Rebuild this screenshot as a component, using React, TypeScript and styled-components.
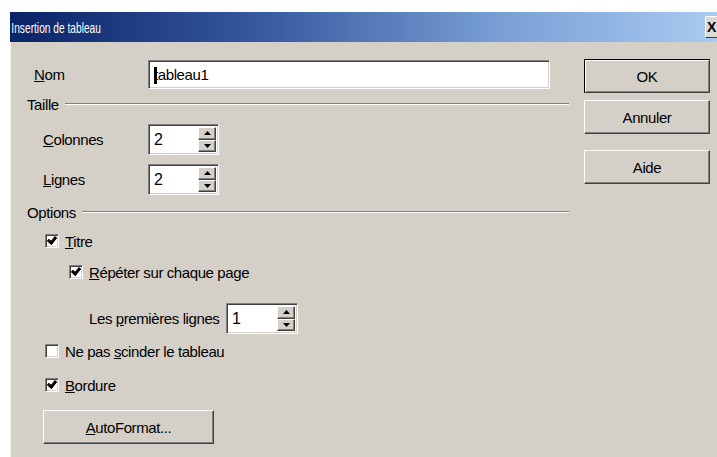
import styled, { createGlobalStyle } from "styled-components";

const Global = createGlobalStyle`
    body {
        margin: 0;
        background: #ffffff;
        font-family: "Liberation Sans", Arial, sans-serif;
        font-size: 15px;
        letter-spacing: -0.4px;
        color: #000;
    }
`;

const FACE = "#d4d0c8";

const App = () => {
    return (
        <>
            <Global />
            <Window>
                <TitleBar>
                    <Caption>Insertion de tableau</Caption>
                    <CloseButton>X</CloseButton>
                </TitleBar>
                <Body>
                    <Main>
                        <FieldRow $top={18} $indent={23}>
                            <Label $width={114}><u>N</u>om</Label>
                            <TextInput>
                                <Caret />
                                <span>tableau1</span>
                            </TextInput>
                        </FieldRow>

                        <Section $top={5}>
                            <span>Taille</span>
                            <Rule />
                        </Section>
                        <FieldRow $top={10} $indent={32}>
                            <Label $width={105}><u>C</u>olonnes</Label>
                            <Spinner value="2" width={71} />
                        </FieldRow>
                        <FieldRow $top={9} $indent={32}>
                            <Label $width={105}><u>L</u>ignes</Label>
                            <Spinner value="2" width={71} />
                        </FieldRow>

                        <Section $top={7}>
                            <span>Options</span>
                            <Rule />
                        </Section>
                        <CheckRow $top={9} $indent={34}>
                            <CheckBox $checked />
                            <span><u>T</u>itre</span>
                        </CheckRow>
                        <CheckRow $top={11} $indent={58}>
                            <CheckBox $checked />
                            <span><u>R</u>épéter sur chaque page</span>
                        </CheckRow>
                        <FieldRow $top={21} $indent={78}>
                            <Label $width={137}>Les <u>p</u>remières lignes</Label>
                            <Spinner value="1" width={72} />
                        </FieldRow>
                        <CheckRow $top={7} $indent={34}>
                            <CheckBox />
                            <span>Ne pas <u>s</u>cinder le tableau</span>
                        </CheckRow>
                        <CheckRow $top={14} $indent={34}>
                            <CheckBox $checked />
                            <span><u>B</u>ordure</span>
                        </CheckRow>
                        <FieldRow $top={15} $indent={32}>
                            <PushButton $width={171}><u>A</u>utoFormat...</PushButton>
                        </FieldRow>
                    </Main>

                    <Side>
                        <PushButton $width={126} $default>OK</PushButton>
                        <PushButton $width={126}>Annuler</PushButton>
                        <PushButton $width={126} $gap={9}>Aide</PushButton>
                    </Side>
                </Body>
            </Window>
        </>
    );
};

interface SpinnerProps {
    value: string;
    width: number;
}

const Spinner = ({ value, width }: SpinnerProps) => (
    <SpinBox style={{ width }}>
        <SpinText>{value}</SpinText>
        <SpinButtons>
            <SpinArrow>
                <svg width="7" height="4" viewBox="0 0 7 4"><path d="M3.5 0 L7 4 L0 4 Z" fill="#000" /></svg>
            </SpinArrow>
            <SpinArrow>
                <svg width="7" height="4" viewBox="0 0 7 4"><path d="M0 0 L7 0 L3.5 4 Z" fill="#000" /></svg>
            </SpinArrow>
        </SpinButtons>
    </SpinBox>
);

const Window = styled.div`
    margin: 12px 0 0 10px;
    width: 707px;
    height: 445px;
    display: flex;
    flex-direction: column;
    background: ${FACE};
    overflow: hidden;
`;

const TitleBar = styled.div`
    height: 30px;
    display: flex;
    align-items: center;
    justify-content: space-between;
    background: linear-gradient(to right, #0a2266 0%, #36589f 35%, #7aa0d6 70%, #a9cbf0 100%);
`;

const Caption = styled.span`
    color: #ffffff;
    font-size: 15px;
    letter-spacing: 0;
    padding-left: 2px;
    transform: scaleX(0.68);
    transform-origin: left center;
    white-space: nowrap;
`;

const CloseButton = styled.div`
    width: 12px;
    height: 22px;
    padding-left: 1px;
    box-sizing: border-box;
    background: #dcdad4;
    border-top: 1px solid #ffffff;
    border-left: 1px solid #ffffff;
    border-bottom: 1px solid #404040;
    font-weight: bold;
    font-size: 14px;
    letter-spacing: 0;
    line-height: 20px;
    color: #000;
`;

const Body = styled.div`
    flex: 1;
    display: flex;
    border-left: 1px solid #f4f2ee;
`;

const Main = styled.div`
    width: 558px;
    display: flex;
    flex-direction: column;
`;

const Side = styled.div`
    display: flex;
    flex-direction: column;
    gap: 7px;
    padding: 17px 0 0 15px;
`;

const FieldRow = styled.div<{ $top: number; $indent: number }>`
    display: flex;
    align-items: center;
    margin-top: ${(p) => p.$top}px;
    padding-left: ${(p) => p.$indent}px;
`;

const Label = styled.span<{ $width: number }>`
    width: ${(p) => p.$width}px;
    flex-shrink: 0;
    white-space: nowrap;
`;

const Section = styled.div<{ $top: number }>`
    display: flex;
    align-items: center;
    gap: 6px;
    height: 20px;
    margin-top: ${(p) => p.$top}px;
    padding-left: 16px;
`;

const Rule = styled.div`
    flex: 1;
    height: 0;
    border-top: 1px solid #808080;
    border-bottom: 1px solid #ffffff;
`;

const Sunken = styled.div`
    box-sizing: border-box;
    background: #ffffff;
    border-top: 1px solid #808080;
    border-left: 1px solid #808080;
    border-right: 1px solid #ffffff;
    border-bottom: 1px solid #ffffff;
    box-shadow: inset 1px 1px 0 #404040, inset -1px -1px 0 ${FACE};
`;

const TextInput = styled(Sunken)`
    width: 402px;
    height: 29px;
    display: flex;
    align-items: center;
    padding-left: 5px;
    position: relative;
`;

const Caret = styled.span`
    position: absolute;
    left: 5px;
    top: 6px;
    width: 3px;
    height: 17px;
    background: #000;
`;

const SpinBox = styled(Sunken)`
    height: 31px;
    display: flex;
    align-items: stretch;
    padding: 2px;
`;

const SpinText = styled.div`
    flex: 1;
    display: flex;
    align-items: center;
    padding-left: 3px;
    font-size: 16px;
`;

const SpinButtons = styled.div`
    width: 18px;
    display: flex;
    flex-direction: column;
`;

const SpinArrow = styled.div`
    flex: 1;
    display: flex;
    align-items: center;
    justify-content: center;
    background: ${FACE};
    border-top: 1px solid #ffffff;
    border-left: 1px solid #ffffff;
    border-right: 1px solid #404040;
    border-bottom: 1px solid #404040;
    box-shadow: inset -1px -1px 0 #808080;
`;

const CheckRow = styled.div<{ $top: number; $indent: number }>`
    display: flex;
    align-items: center;
    gap: 6px;
    height: 20px;
    margin-top: ${(p) => p.$top}px;
    padding-left: ${(p) => p.$indent}px;
    white-space: nowrap;
`;

const CheckBox = styled(Sunken)<{ $checked?: boolean }>`
    width: 14px;
    height: 14px;
    flex-shrink: 0;
    position: relative;
    &::after {
        content: "";
        display: ${(p) => (p.$checked ? "block" : "none")};
        position: absolute;
        left: 3px;
        top: 0px;
        width: 3px;
        height: 6px;
        border-right: 3px solid #000;
        border-bottom: 3px solid #000;
        transform: rotate(40deg);
    }
`;

const PushButton = styled.div<{ $width: number; $default?: boolean; $gap?: number }>`
    width: ${(p) => p.$width}px;
    height: 34px;
    box-sizing: border-box;
    display: flex;
    align-items: center;
    justify-content: center;
    margin-top: ${(p) => p.$gap ?? 0}px;
    background: ${FACE};
    border-top: 1px solid ${(p) => (p.$default ? "#000" : "#ffffff")};
    border-left: 1px solid ${(p) => (p.$default ? "#000" : "#ffffff")};
    border-right: 1px solid #404040;
    border-bottom: 1px solid #404040;
    box-shadow: ${(p) =>
        p.$default
            ? "inset 1px 1px 0 #ffffff, inset -1px -1px 0 #808080"
            : "inset -1px -1px 0 #808080"};
`;

export default App;
